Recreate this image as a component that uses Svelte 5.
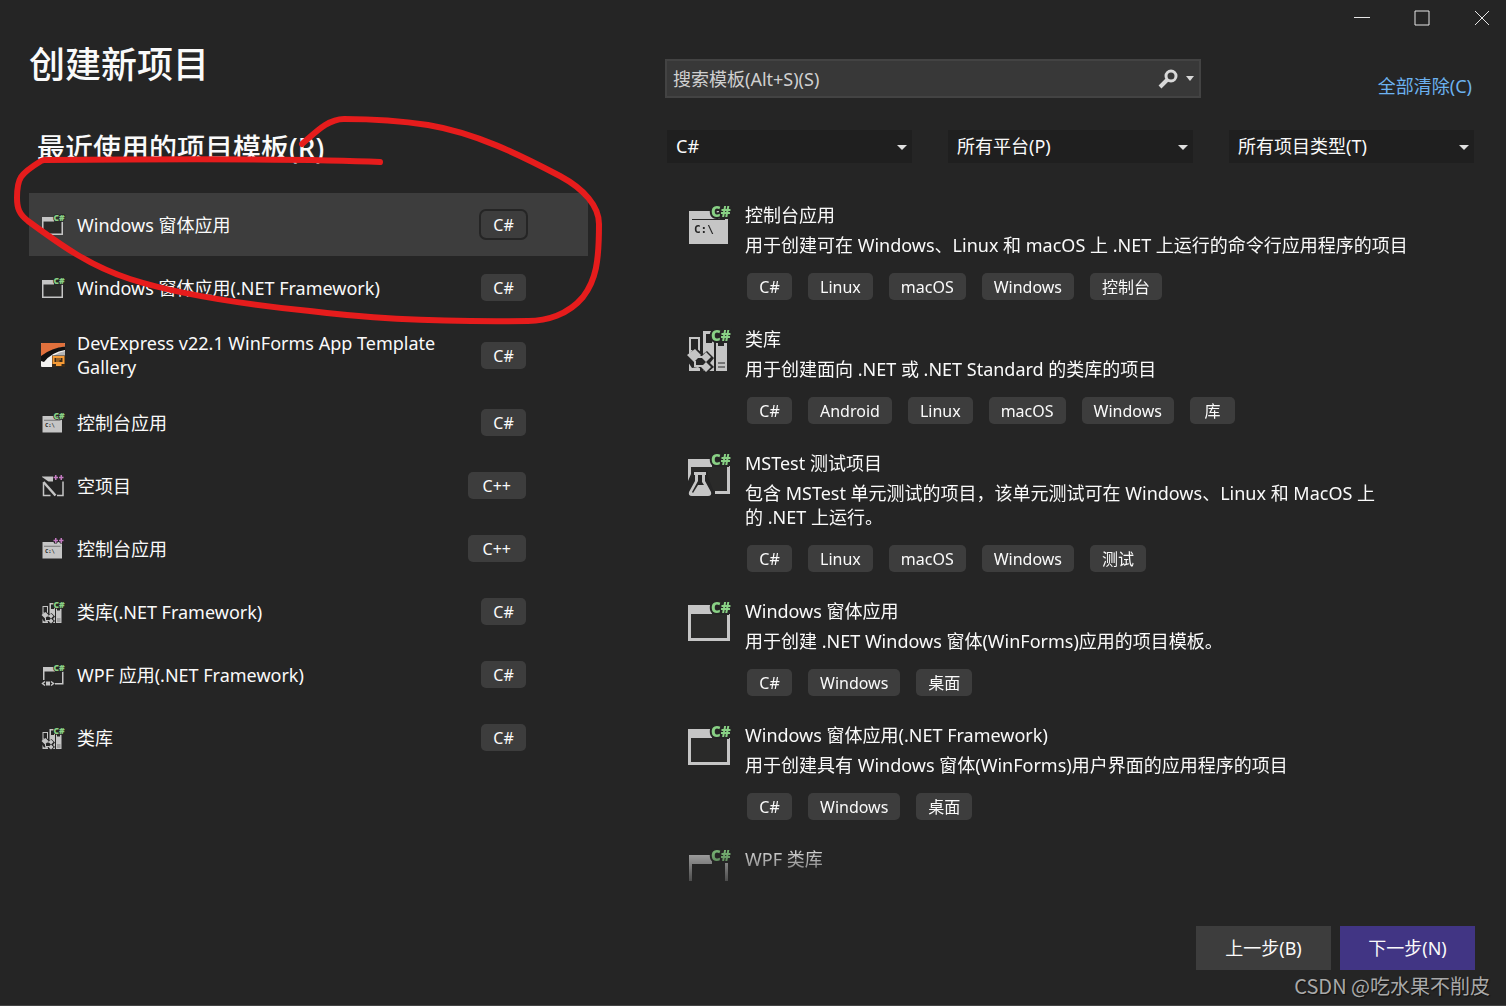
<script>
   let search = $state('');
   let selected = $state(0);

   const recent = [
      { name: 'Windows 窗体应用', icon: 'window', lang: 'C#' },
      { name: 'Windows 窗体应用(.NET Framework)', icon: 'window', lang: 'C#' },
      { name: 'DevExpress v22.1 WinForms App Template Gallery', icon: 'devexpress', lang: 'C#' },
      { name: '控制台应用', icon: 'console', lang: 'C#' },
      { name: '空项目', icon: 'empty', lang: 'C++' },
      { name: '控制台应用', icon: 'console', lang: 'C++' },
      { name: '类库(.NET Framework)', icon: 'library', lang: 'C#' },
      { name: 'WPF 应用(.NET Framework)', icon: 'wpf', lang: 'C#' },
      { name: '类库', icon: 'library', lang: 'C#' }
   ];

   const filters = [
      { label: '语言', value: 'C#' },
      { label: '平台', value: '所有平台(P)' },
      { label: '项目类型', value: '所有项目类型(T)' }
   ];

   const templates = [
      {
         name: '控制台应用',
         icon: 'console',
         text: '用于创建可在 Windows、Linux 和 macOS 上 .NET 上运行的命令行应用程序的项目',
         tags: ['C#', 'Linux', 'macOS', 'Windows', '控制台']
      },
      {
         name: '类库',
         icon: 'library',
         text: '用于创建面向 .NET 或 .NET Standard 的类库的项目',
         tags: ['C#', 'Android', 'Linux', 'macOS', 'Windows', '库']
      },
      {
         name: 'MSTest 测试项目',
         icon: 'test',
         text: '包含 MSTest 单元测试的项目，该单元测试可在 Windows、Linux 和 MacOS 上 的\u00a0.NET 上运行。',
         tags: ['C#', 'Linux', 'macOS', 'Windows', '测试']
      },
      {
         name: 'Windows 窗体应用',
         icon: 'window',
         text: '用于创建 .NET Windows 窗体(WinForms)应用的项目模板。',
         tags: ['C#', 'Windows', '桌面']
      },
      {
         name: 'Windows 窗体应用(.NET Framework)',
         icon: 'window',
         text: '用于创建具有 Windows 窗体(WinForms)用户界面的应用程序的项目',
         tags: ['C#', 'Windows', '桌面']
      },
      { name: 'WPF 类库', icon: 'wpflib', text: '', tags: [] }
   ];
</script>

{#snippet icon(kind, lang, size)}
   <svg class="icon" width={size} height={size} viewBox="0 0 44 44" aria-hidden="true">
      {#if kind === 'devexpress'}
         <rect x="-2" y="-2" width="48" height="48" rx="2" fill="#f4f3f1" />
         <path d="M-2 26V0q0-2 2-2h44q2 0 2 2v5Q20 10-2 26z" fill="#e0703c" />
         <path d="M12 36Q24 18 46 14v12H20z" fill="#b5b5b5" />
         <path d="M-2 24Q20 7 46 5v7Q20 16 4 36L-2 34z" fill="#111" />
         <path d="M20 23h26v23H20z" fill="#3a2a1a" />
         <path d="M23 26h20v12H23zM28 42h11" fill="none" stroke="#f59a35" stroke-width="4" />
         <path d="M28 30h10M28 34h7" stroke="#f59a35" stroke-width="2" />
      {:else}
         {#if kind === 'window'}
            <path d="M3 15h36v24H3z" fill="#2a2a29" />
            <path d="M0 6h24v9H3v24h36V15h3v27H0z" fill="#c5c5c5" />
         {:else if kind === 'wpflib'}
            <path d="M1 8h23v9H4v27H1zM37 14h3v30h-3z" fill="#c5c5c5" />
         {:else if kind === 'wpf'}
            <path d="M2 6h24v9H5v17H2zM40 15h3v26H26v-3h14z" fill="#c5c5c5" />
            <path d="M6 35l-5 4 5 4M18 35l5 4-5 4" fill="none" stroke="#c5c5c5" stroke-width="3" />
            <path d="M8 35h8v8H8z" fill="#c5c5c5" />
         {:else if kind === 'console'}
            <path d="M1 8h39v33H1z" fill="#c5c5c5" />
            <path d="M4 16.5h33" stroke="#252525" />
            <text class="prompt" x="6" y="30">C:\</text>
         {:else if kind === 'empty'}
            <path d="M0 3h22v10h-9L0 4z" fill="#c5c5c5" />
            <path d="M3 15v26h14M42 13v28H30" fill="none" stroke="#c5c5c5" stroke-width="3" />
            <path d="M3 14l24 27" stroke="#c5c5c5" stroke-width="5" />
         {:else if kind === 'test'}
            <path d="M3 16h36v24H3z" fill="#2a2a29" />
            <path d="M0 8h24v8H3v7l-3 7zM39 15h3v28H27v-3h12z" fill="#c5c5c5" />
            <path d="M4 20h16v6l6 15-3 5H0V34l5-9z" fill="#252525" />
            <path d="M6 21h12v3h-1v6l6 11q1 4-3 4H4q-4 0-3-4l6-11v-6H6z" fill="#c5c5c5" />
            <path d="M10 24h4v7l2 3h-6l-5 8-1-1 6-11z" fill="#252525" />
         {:else if kind === 'library'}
            <path d="M1 10h11v18H1zM15 4h11v40H15zM28 12h11v32H28zM1 34h11v10H1z" fill="#c5c5c5" />
            <path d="M3 12h7v11H3zM18 7h6v9h-6zM30 14h6v5h-6z" fill="#252525" />
            <path d="M30 36h7M30 40h7" stroke="#252525" />
            <path d="M7 20l8 7 4-3 7 7-4 5 4 4-7 6-9-6-6 1-6-9z" fill="#252525" />
            <path d="M7 22l6 6-7 7-7-7zM18 25l5 5-5 5-5-5zM18 35l5 5-5 5-5-5z" fill="#c5c5c5" />
            <path d="M7 34v5h8M10 30h5" fill="none" stroke="#c5c5c5" stroke-width="2" />
         {/if}
         {#if lang === 'C#'}
            <text class="badge" x="23" y="14">C#</text>
         {:else}
            <path d="M23 6h9M27 2v9M34 6h9M39 2v9" fill="none" stroke="#252525" stroke-width="6" />
            <path d="M23 5h9M27.500 0v10M34 5h9M38.500 0v10" fill="none" stroke="#c27ac0" stroke-width="3" />
         {/if}
      {/if}
   </svg>
{/snippet}

<div class="window">
   <header class="titlebar">
      <button aria-label="最小化">
         <svg width="16" height="16"><path d="M0 7.5h16" /></svg>
      </button>
      <button aria-label="最大化">
         <svg width="16" height="16"><path d="M1 1h14v14H1z" /></svg>
      </button>
      <button aria-label="关闭">
         <svg width="16" height="16"><path d="M1 1l14 14M15 1L1 15" /></svg>
      </button>
   </header>

   <main>
      <section class="recent">
         <h1>创建新项目</h1>
         <h2>最近使用的项目模板(R)</h2>
         <ul>
            {#each recent as item, i}
               <li>
                  <button class="recent-item" class:selected={i === selected} onclick={() => (selected = i)}>
                     {@render icon(item.icon, item.lang, 22)}
                     <span class="name">{item.name}</span>
                     <span class="tag" class:wide={item.lang === 'C++'}>{item.lang}</span>
                  </button>
               </li>
            {/each}
         </ul>
      </section>

      <section class="browse">
         <div class="search-row">
            <div class="search">
               <input type="text" aria-label="搜索模板" placeholder="搜索模板(Alt+S)(S)" bind:value={search} />
               <button aria-label="搜索">
                  <svg width="20" height="20" viewBox="0 0 20 20">
                     <circle cx="13" cy="7" r="5" fill="none" stroke="#d8d8d8" stroke-width="3" />
                     <path d="M9 11l-7 7" stroke="#d8d8d8" stroke-width="4" />
                  </svg>
               </button>
               <button aria-label="搜索选项">
                  <svg width="10" height="5"><path d="M1 0h8L5 5z" fill="#d8d8d8" /></svg>
               </button>
            </div>
            <a href="#clear">全部清除(C)</a>
         </div>

         <div class="filters">
            {#each filters as filter}
               <div class="filter">
                  <select aria-label={filter.label}>
                     <option>{filter.value}</option>
                  </select>
                  <svg class="arrow" width="10" height="5"><path d="M0 0h10L5 5z" fill="#e0e0e0" /></svg>
               </div>
            {/each}
         </div>

         <ul class="templates">
            {#each templates as item}
               <li class="template">
                  {@render icon(item.icon, 'C#', 44)}
                  <div class="info">
                     <h3>{item.name}</h3>
                     <p>{item.text}</p>
                     <div class="tags">
                        {#each item.tags as tag}
                           <span class="tag">{tag}</span>
                        {/each}
                     </div>
                  </div>
               </li>
            {/each}
         </ul>
      </section>
   </main>

   <footer>
      <button>上一步(B)</button>
      <button class="primary">下一步(N)</button>
   </footer>

   <svg class="marker" width="620" height="340" aria-hidden="true">
      <path
         d="M302 144C316 132 328 119 344 119C374 119 402 121 428 125C476 133 520 155 560 176C584 189 599 206 599 224C599 262 596 280 583 297C568 315 546 321 528 321C450 322 380 320 310 311C240 304 180 295 130 279C90 266 62 246 28 221C19 214 17 208 17 198C17 178 20 174 41 161L44 160C160 159 300 158 380 162"
      />
   </svg>
   <span class="watermark">CSDN @吃水果不削皮</span>
</div>

<style>
   :global(body) {
      background: #252525;
   }

   .window {
      position: relative;
      display: flex;
      flex-direction: column;
      height: 100vh;
      box-sizing: border-box;
      overflow: hidden;
      border-bottom: 1px solid #434343;
      background: #252525;
      color: #fafafa;
      font-family: "Noto Sans", "Noto Sans CJK SC", sans-serif;
      font-size: 18px;
      line-height: 24px;
   }

   button,
   input,
   select {
      margin: 0;
      padding: 0;
      border: 0;
      border-radius: 0;
      background: none;
      color: inherit;
      font: inherit;
   }

   h1, h2, h3, p, ul {
      margin: 0;
      padding: 0;
      font-size: inherit;
      font-weight: 400;
      list-style: none;
   }

   .titlebar {
      display: flex;
      justify-content: flex-end;
      gap: 12px;
      height: 36px;
   }

   .titlebar button {
      display: flex;
      align-items: center;
      justify-content: center;
      width: 48px;
   }

   .titlebar path {
      fill: none;
      stroke: #e6e6e6;
   }

   main {
      flex: 1;
      display: grid;
      grid-template-columns: 559fr 810fr;
      grid-template-rows: minmax(0, 1fr);
      gap: 77px;
      min-height: 0;
      padding: 0 31px 0 29px;
   }

   /* recent templates */

   h1 {
      font-size: 36px;
      font-weight: 500;
      line-height: 58px;
   }

   h2 {
      margin: 36px 0 27px 8px;
      font-size: 28px;
      font-weight: 500;
      line-height: 36px;
   }

   .recent-item {
      display: flex;
      align-items: center;
      width: 100%;
      min-height: 63px;
      padding: 12px 62px 12px 13px;
      text-align: left;
   }

   .recent-item.selected {
      background: #3d3d3d;
   }

   .recent-item.selected .tag {
      outline: 2px solid #252525;
   }

   .name {
      flex: 1;
      margin: 0 16px 0 13px;
   }

   .icon {
      flex: none;
      overflow: visible;
   }

   .badge {
      fill: #89d185;
      stroke: #252525;
      stroke-width: 4px;
      paint-order: stroke;
      font: 900 15px "Noto Sans", sans-serif;
   }

   .recent .badge {
      font-size: 17px;
      stroke-width: 3px;
   }

   .prompt {
      fill: #252525;
      font: bold 11px "DejaVu Sans Mono", monospace;
   }

   .tag {
      min-width: 21px;
      padding: 1px 12px 0;
      border-radius: 5px;
      background: #3d3d3d;
      font-size: 16px;
      line-height: 26px;
      text-align: center;
   }

   .tag.wide {
      padding: 1px 15px 0;
   }

   /* search and filters */

   .browse {
      display: flex;
      flex-direction: column;
      min-height: 0;
   }

   .search-row {
      display: flex;
      align-items: center;
      justify-content: space-between;
      margin: 23px 3px 32px 0;
   }

   .search {
      display: flex;
      align-items: center;
      box-sizing: border-box;
      width: 536px;
      height: 39px;
      padding: 0 4px 0 6px;
      border: 2px solid #434343;
      background: #383838;
   }

   .search input {
      flex: 1;
      height: 100%;
      outline: none;
   }

   .search input::placeholder {
      color: #d0d0d0;
      opacity: 1;
   }

   .search button {
      display: flex;
      margin-left: 7px;
   }

   .search-row a {
      padding-top: 14px;
      color: #6cb2f0;
      text-decoration: none;
   }

   .filters {
      display: grid;
      grid-template-columns: repeat(3, 1fr);
      gap: 36px;
      margin: 0 1px 28px 2px;
   }

   .filter {
      position: relative;
   }

   .filter select {
      display: block;
      width: 100%;
      height: 33px;
      padding: 0 24px 2px 9px;
      appearance: none;
      background: #1f1f1f;
   }

   .arrow {
      position: absolute;
      top: 15px;
      right: 5px;
      pointer-events: none;
   }

   /* template list */

   .templates {
      flex: 1;
      min-height: 0;
      overflow: hidden;
      padding: 12px 0 0 23px;
      mask-image: linear-gradient(to bottom, #000 calc(100% - 40px), rgba(0, 0, 0, 0.25));
   }

   .template {
      display: flex;
      gap: 13px;
      padding-bottom: 27px;
   }

   .info p {
      max-width: 685px;
      margin: 6px 0 16px;
   }

   .tags {
      display: flex;
      gap: 16px;
      margin-left: 2px;
   }

   footer {
      display: flex;
      justify-content: flex-end;
      gap: 9px;
      padding: 45px 31px 35px;
   }

   footer button {
      width: 135px;
      height: 44px;
      background: #3d3d3d;
   }

   footer .primary {
      background: #413584;
   }

   /* pen mark and watermark over the dialog */

   .marker {
      position: absolute;
      top: 0;
      left: 0;
      pointer-events: none;
   }

   .marker path {
      fill: none;
      stroke: #e61c1c;
      stroke-width: 6px;
      stroke-linecap: round;
      stroke-linejoin: round;
   }

   .watermark {
      position: absolute;
      right: 16px;
      bottom: 7px;
      color: #a9a9a9;
      font-family: "Noto Sans CJK SC", sans-serif;
      font-size: 20px;
      text-shadow: 1px 1px 1px #111;
   }
</style>
